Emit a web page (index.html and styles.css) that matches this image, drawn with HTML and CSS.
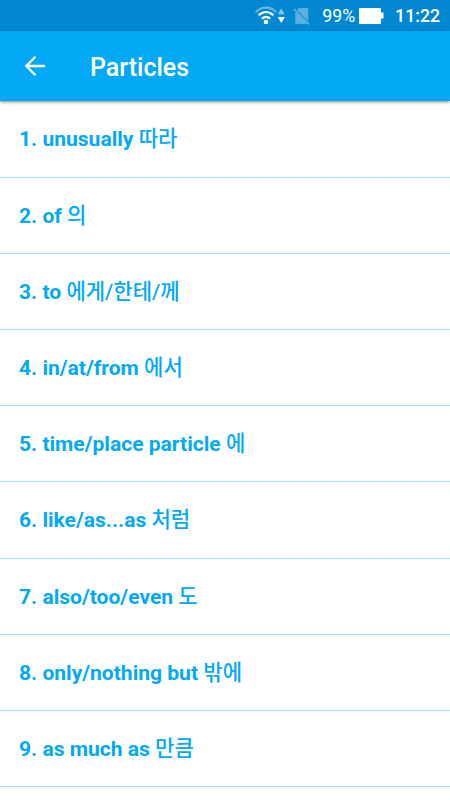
FILE: index.html
```
<!DOCTYPE html>
<html lang="en">
<head>
    <meta charset="UTF-8">
    <meta name="viewport" content="width=device-width, initial-scale=1.0">
    <title>Particles</title>
    <link rel="stylesheet" href="styles.css">
</head>
<body>
    <div class="status-bar">
        <svg class="wifi" width="30" height="20" viewBox="0 0 30 20">
            <g fill="none" stroke="#fff" stroke-width="2.200">
                <path d="M0.800 6.200C6.500 0.200 15.500 0.200 21.200 6.200" opacity="0.4"/>
                <path d="M3.700 9.300C8 4.900 14 4.900 18.300 9.300"/>
                <path d="M6.900 12.700C9.400 10.200 12.600 10.200 15.100 12.700"/>
            </g>
            <circle cx="11" cy="16" r="2.300" fill="#fff"/>
            <path d="M22.800 8.300h7L26.300 2.500z" fill="#fff" opacity="0.5"/>
            <path d="M22.800 11h7l-3.500 6z" fill="#fff"/>
        </svg>
        <svg class="no-sim" width="18" height="18" viewBox="0 0 18 18">
            <path d="M4 3L6 1H14.300q1 0 1 1V14.300zM2.300 4.600L14.300 16.500q-0.300 0.500-1 0.500H3.300q-1 0-1-1z" fill="#fff" opacity="0.350"/>
            <path d="M0.800 1.800L16.500 17.500" stroke="#fff" stroke-width="1.200" opacity="0.4"/>
        </svg>
        <span class="percent">99%</span>
        <svg class="battery" width="25" height="18" viewBox="0 0 25 18">
            <path d="M1 1h20q1 0 1 1v3.500h2.500v6H22v4.500q0 1-1 1H1q-1 0-1-1v-14q0-1 1-1z" fill="#fff"/>
        </svg>
        <span class="clock">11:22</span>
    </div>

    <div class="header">
        <svg class="back" width="22" height="22" viewBox="0 0 22 22">
            <path d="M21 11H2.500M11.500 1.700L2.200 11l9.300 9.300" fill="none" stroke="#fff" stroke-width="2.300"/>
        </svg>
        <h1>Particles</h1>
    </div>

    <div class="list">
        <div class="item">1. unusually <span lang="ko">따라</span></div>
        <div class="item">2. of <span lang="ko">의</span></div>
        <div class="item">3. to <span lang="ko">에게/한테/께</span></div>
        <div class="item">4. in/at/from <span lang="ko">에서</span></div>
        <div class="item">5. time/place particle <span lang="ko">에</span></div>
        <div class="item">6. like/as...as <span lang="ko">처럼</span></div>
        <div class="item">7. also/too/even <span lang="ko">도</span></div>
        <div class="item">8. only/nothing but <span lang="ko">밖에</span></div>
        <div class="item">9. as much as <span lang="ko">만큼</span></div>
    </div>
</body>
</html>
```
FILE: styles.css
```
body {
    margin: 0;
    height: 800px;
    overflow: hidden;
    font-family: Roboto, "Noto Sans CJK KR", sans-serif;
    background-color: #fff;
}
.status-bar {
    display: flex;
    align-items: center;
    justify-content: flex-end;
    box-sizing: border-box;
    height: 31px;
    padding: 1px 10px 0 0;
    background-color: #0288d1;
    color: #fff;
    font-size: 17.700px;
}
.no-sim {
    margin-left: 8px;
}
.percent {
    margin-left: 11px;
}
.battery {
    margin-left: 4px;
}
.clock {
    margin-left: 11px;
    font-weight: 500;
}
.header {
    display: flex;
    align-items: center;
    box-sizing: border-box;
    height: 70px;
    padding: 0 0 0 24px;
    background-color: #03a9f4;
    color: #fff;
    box-shadow: 0 1px 3px rgba(0,0,0,0.5);
}
h1 {
    margin: 3px 0 0 44px;
    font-size: 25px;
    font-weight: 500;
}
.list {
    padding-top: 0.400px;
}
.item {
    box-sizing: border-box;
    height: 76.200px;
    padding-left: 19px;
    border-bottom: 1px solid #a3dffb;
    color: #03a9f4;
    font-size: 21.050px;
    font-weight: 700;
    line-height: 76px;
    white-space: nowrap;
}
.item span {
    font-weight: 500;
}
```
